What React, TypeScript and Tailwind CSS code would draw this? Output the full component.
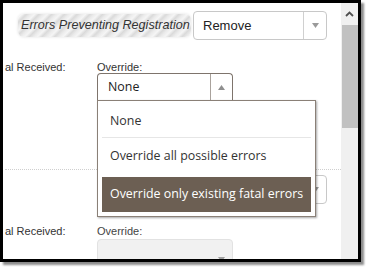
import React from "react";

const Tri = ({ up = false, color = "#9a9a9a" }: { up?: boolean; color?: string }) => (
  <svg width="7" height="5" viewBox="0 0 7 5">
    {up ? <polygon points="0,5 7,5 3.5,0" fill={color} /> : <polygon points="0,0 7,0 3.5,5" fill={color} />}
  </svg>
);

function RemoveSelect() {
  return (
    <div className="flex h-[29px] w-[134px] items-stretch rounded-[4px] border border-[#c8c8c8] bg-white">
      <div className="flex flex-1 items-center pl-[9px] text-[13px] text-[#222]">Remove</div>
      <div className="flex w-[23px] items-center justify-center border-l border-[#d0d0d0]">
        <Tri />
      </div>
    </div>
  );
}

export default function App() {
  return (
    <div className="h-[267px] w-[367px] overflow-hidden bg-white font-['Liberation_Sans',Arial,sans-serif]">
      <div className="flex h-[262px] w-[361px] border-[3px] border-black bg-white shadow-[3px_3px_2px_rgba(0,0,0,0.45)]">
        <div className="relative flex-1 overflow-hidden">
          {/* block 1 */}
          <div className="mt-[8px] flex items-center">
            <div className="ml-[15px] flex h-[23px] w-[173px] items-center overflow-hidden whitespace-nowrap rounded-[6px] bg-[repeating-linear-gradient(135deg,#ebebeb_0px,#f5f5f5_3px,#dadada_6px,#ebebeb_9px)] pl-[3px] text-[12.6px] italic text-[#333] shadow-[0_0_3px_rgba(0,0,0,0.12)]">
              Errors Preventing Registration
            </div>
            <div className="ml-[2px]">
              <RemoveSelect />
            </div>
          </div>
          <div className="mt-[21px] flex">
            <div className="w-[94px] pl-[2px] text-[11px] leading-[13px] text-[#333]">al Received:</div>
            <div>
              <div className="text-[11px] leading-[13px] text-[#333]">Override:</div>
              <div className="mt-[-1px] flex h-[28px] w-[136px] items-stretch rounded-t-[4px] border border-b-0 border-[#7e746c] bg-white font-['Open_Sans',sans-serif]">
                <div className="flex flex-1 items-center pl-[10px] text-[12.4px] text-[#222]">None</div>
                <div className="flex w-[22px] items-center justify-center border-l border-[#a9a29c]">
                  <Tri up color="#8f8f8f" />
                </div>
              </div>
            </div>
          </div>
          <div className="ml-[2px] mt-[68px] border-t border-dotted border-[#cfcfcf]" />
          {/* block 2 */}
          <div className="mt-[5px] flex">
            <div className="ml-[190px]">
              <RemoveSelect />
            </div>
          </div>
          <div className="mt-[21px] flex">
            <div className="w-[94px] pl-[2px] text-[11px] leading-[13px] text-[#333]">al Received:</div>
            <div>
              <div className="text-[11px] leading-[13px] text-[#444]">Override:</div>
              <div className="mt-[1px] flex h-[28px] w-[136px] items-stretch rounded-t-[4px] border border-[#e2e2e2] bg-[#f1f1f1]">
                <div className="flex-1" />
                <div className="flex w-[22px] items-end justify-center pb-[4px]">
                  <Tri color="#a0a0a0" />
                </div>
              </div>
            </div>
          </div>

          {/* open dropdown */}
          <div className="absolute left-[94px] top-[97px] w-[219px] border border-[#8a8077] bg-white px-[4px] pb-[4px] pt-[4px] font-['Open_Sans',sans-serif] text-[12.4px] text-[#333] shadow-[1px_1px_2px_rgba(0,0,0,0.35)]">
            <div className="flex h-[33px] items-center whitespace-nowrap border-b border-[#e6e6e6] pl-[8px]">None</div>
            <div className="flex h-[37px] items-center whitespace-nowrap pl-[8px]">Override all possible errors</div>
            <div className="mt-[2px] flex h-[35px] items-center whitespace-nowrap bg-[#6c5f53] pl-[8px] text-white">
              Override only existing fatal errors
            </div>
          </div>
        </div>
        {/* scrollbar */}
        <div className="flex w-[17px] flex-col bg-[#f0f0f0]">
          <div className="flex h-[22px] items-center justify-center">
            <svg width="9" height="6" viewBox="0 0 9 6">
              <polyline points="1,5 4.5,1.5 8,5" fill="none" stroke="#505050" strokeWidth="1.8" />
            </svg>
          </div>
          <div className="ml-[1px] h-[103px] bg-[#c1c1c1]" />
        </div>
      </div>
    </div>
  );
}
